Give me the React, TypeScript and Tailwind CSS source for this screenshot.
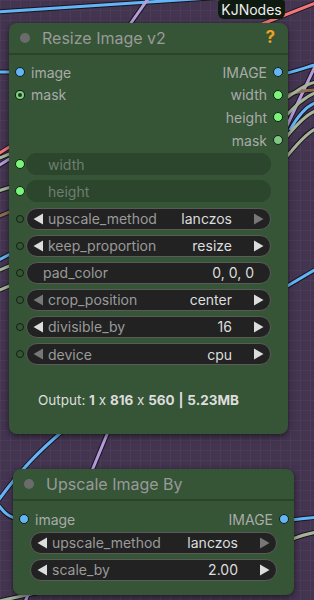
import React from "react";

type Arrow = "on" | "off" | null;

function Tri({ dir, state }: { dir: "l" | "r"; state: Arrow }) {
  if (!state) return null;
  const fill = state === "on" ? "#dddddd" : "#777777";
  return (
    <svg width="11" height="12" viewBox="0 0 11 12" className="shrink-0">
      {dir === "l" ? (
        <polygon points="10,0.5 10,11.5 0.5,6" fill={fill} />
      ) : (
        <polygon points="1,0.5 1,11.5 10.5,6" fill={fill} />
      )}
    </svg>
  );
}

function Dot({ kind }: { kind: "blue" | "green" | "dimgreen" | "hollow" | "ring" }) {
  if (kind === "hollow")
    return <div className="w-[8px] h-[8px] rounded-full border border-[#141f14] shrink-0" />;
  if (kind === "ring")
    return (
      <div className="w-[10px] h-[10px] rounded-full bg-[#141f14] flex items-center justify-center shrink-0">
        <div className="w-[8px] h-[8px] rounded-full bg-[#7fd07f] flex items-center justify-center">
          <div className="w-[4px] h-[4px] rounded-full bg-[#1f3320]" />
        </div>
      </div>
    );
  const bg =
    kind === "blue" ? "bg-[#64b5f6]" : kind === "dimgreen" ? "bg-[#81c784]" : "bg-[#7af57a]";
  return <div className={`w-[10px] h-[10px] rounded-full border border-[#141f14] shrink-0 ${bg}`} />;
}

function Widget({
  label,
  value,
  left = "on",
  right = "on",
  disabled = false,
}: {
  label: string;
  value?: string;
  left?: Arrow;
  right?: Arrow;
  disabled?: boolean;
}) {
  if (disabled) {
    return (
      <div className="flex-1 h-[22px] rounded-full bg-[#2c452d] flex items-center pl-[22px] text-[14px] text-[#6e7f6e]">
        {label}
      </div>
    );
  }
  const plain = !left && !right;
  return (
    <div
      className={`flex-1 h-[22px] rounded-full bg-[#222222] border border-[#5a5a5a] flex items-center text-[14px] ${
        plain ? "px-[16px]" : "pl-[6px] pr-[6px]"
      }`}
    >
      <Tri dir="l" state={left} />
      <span className={`text-[#9a9a9a] ${plain ? "" : "ml-[4px]"}`}>{label}</span>
      <span className="ml-auto text-[#dddddd]">{value}</span>
      {!plain && (
        <span className="ml-[21px] flex">
          <Tri dir="r" state={right} />
        </span>
      )}
    </div>
  );
}

function WidgetRow({ dot, children }: { dot: "hollow" | "green"; children: React.ReactNode }) {
  return (
    <div className="flex items-center pl-[7px] pr-[17px] gap-[2px]">
      <div className="w-[8px] flex justify-center">
        <Dot kind={dot} />
      </div>
      {children}
    </div>
  );
}

function Wires() {
  const wires: { d: string; c: string }[] = [
    { d: "M-5 12 C 80 6, 160 2, 240 -4", c: "#64b5f6" },
    { d: "M150 -4 L 126 30", c: "#b39ddb" },
    { d: "M262 24 L 318 2", c: "#f07878" },
    { d: "M-5 72 L 15 72", c: "#64b5f6" },
    { d: "M318 60 L 284 132", c: "#b39ddb" },
    { d: "M284 74 C 300 70, 310 66, 318 64", c: "#64b5f6" },
    { d: "M284 96 C 296 92, 306 90, 318 90", c: "#8d6e53" },
    { d: "M284 100 C 300 88, 310 82, 318 82", c: "#a6b59a" },
    { d: "M284 118 C 300 100, 310 94, 318 92", c: "#a6b59a" },
    { d: "M290 130 C 300 112, 310 104, 318 102", c: "#64b5f6" },
    { d: "M284 140 C 300 120, 310 112, 318 110", c: "#a6b59a" },
    { d: "M284 160 C 300 140, 310 130, 318 128", c: "#a6b59a" },
    { d: "M284 288 L 318 268", c: "#64b5f6" },
    { d: "M-5 156 L 14 144", c: "#f07878" },
    { d: "M-5 168 L 14 156", c: "#b39ddb" },
    { d: "M-5 160 L 14 152", c: "#a6b59a" },
    { d: "M-5 192 L 14 186", c: "#a6b59a" },
    { d: "M-5 218 L 14 210", c: "#8d6e53" },
    { d: "M-5 262 L 14 252", c: "#64b5f6" },
    { d: "M-5 272 L 14 264", c: "#a6b59a" },
    { d: "M-5 292 L 14 284", c: "#a6b59a" },
    { d: "M-5 505 C 20 470, 40 450, 64 430", c: "#64b5f6" },
    { d: "M-5 500 C 4 514, 10 518, 20 519", c: "#64b5f6" },
    { d: "M108 432 L 84 490", c: "#b39ddb" },
    { d: "M290 520 C 300 519, 310 518, 318 517", c: "#64b5f6" },
    { d: "M290 540 C 300 536, 310 533, 318 532", c: "#a6b59a" },
    { d: "M-5 602 L 40 592", c: "#a6b59a" },
    { d: "M24 604 L 32 586", c: "#b39ddb" },
  ];
  return (
    <svg className="absolute inset-0" width="314" height="600" viewBox="0 0 314 600">
      {wires.map((w, i) => (
        <path key={"o" + i} d={w.d} stroke="#1a1420" strokeWidth="5" fill="none" />
      ))}
      {wires.map((w, i) => (
        <path key={"c" + i} d={w.d} stroke={w.c} strokeWidth="3" fill="none" />
      ))}
    </svg>
  );
}

function TitleBar({ title, help }: { title: string; help?: boolean }) {
  return (
    <div className="h-[32px] border-b-2 border-[#2a432b] flex items-center pl-[11px] pr-[13px]">
      <div className="w-[10px] h-[10px] rounded-full bg-[#6b6b6b]" />
      <span className="ml-[12px] text-[16px] text-[#9a9a9a]">{title}</span>
      {help && <span className="ml-auto text-[17px] font-bold text-[#f0a020]">?</span>}
    </div>
  );
}

function IORow({
  inLabel,
  inDot,
  outLabel,
  outDot,
}: {
  inLabel?: string;
  inDot?: "blue" | "ring";
  outLabel: string;
  outDot: "blue" | "green" | "dimgreen";
}) {
  return (
    <div className="h-[22.6px] flex items-center pl-[6px] pr-[5px] text-[14px] text-[#aaaaaa]">
      {inLabel && inDot && (
        <>
          <div className="w-[10px] flex justify-center">
            <Dot kind={inDot} />
          </div>
          <span className="ml-[6px]">{inLabel}</span>
        </>
      )}
      <span className="ml-auto mr-[6px]">{outLabel}</span>
      <div className="w-[10px] flex justify-center">
        <Dot kind={outDot} />
      </div>
    </div>
  );
}

export default function App() {
  return (
    <div
      className="relative w-[314px] h-[600px] overflow-hidden bg-[#433450] bg-[linear-gradient(#4b3b58_1px,transparent_1px),linear-gradient(90deg,#4b3b58_1px,transparent_1px)] bg-[size:10px_10px]"
      style={{ fontFamily: "Inter, 'Noto Sans', sans-serif" }}
    >
      <Wires />

      {/* KJNodes badge */}
      <div className="absolute left-[218px] top-0 w-[67px] h-[19px] rounded-b-[6px] rounded-t-[3px] bg-[#0e1a0f] flex items-center justify-center text-[14px] leading-none text-[#eeeeee]">
        KJNodes
      </div>

      {/* Resize Image v2 */}
      <div className="absolute left-[9px] top-[23px] w-[279px] h-[411px] rounded-[8px] bg-[#355536] shadow-[0_2px_6px_rgba(0,0,0,0.55)]">
        <TitleBar title="Resize Image v2" help />
        <div className="pt-[6px]">
          <IORow inLabel="image" inDot="blue" outLabel="IMAGE" outDot="blue" />
          <IORow inLabel="mask" inDot="ring" outLabel="width" outDot="green" />
          <IORow outLabel="height" outDot="green" />
          <IORow outLabel="mask" outDot="dimgreen" />
        </div>
        <div className="mt-[2px] flex flex-col gap-[5.1px]">
          <WidgetRow dot="green">
            <Widget label="width" disabled />
          </WidgetRow>
          <WidgetRow dot="green">
            <Widget label="height" disabled />
          </WidgetRow>
          <WidgetRow dot="hollow">
            <Widget label="upscale_method" value="lanczos" right="off" />
          </WidgetRow>
          <WidgetRow dot="hollow">
            <Widget label="keep_proportion" value="resize" />
          </WidgetRow>
          <WidgetRow dot="hollow">
            <Widget label="pad_color" value="0, 0, 0" left={null} right={null} />
          </WidgetRow>
          <WidgetRow dot="hollow">
            <Widget label="crop_position" value="center" left="off" />
          </WidgetRow>
          <WidgetRow dot="hollow">
            <Widget label="divisible_by" value="16" />
          </WidgetRow>
          <WidgetRow dot="hollow">
            <Widget label="device" value="cpu" left="off" />
          </WidgetRow>
        </div>
        <div className="mt-[25px] pl-[29px] h-[20px] flex items-center text-[13.5px] text-[#dddddd]">
          Output:&nbsp;<b>1</b>&nbsp;x&nbsp;<b>816</b>&nbsp;x&nbsp;<b>560</b>&nbsp;<b>|</b>&nbsp;<b>5.23MB</b>
        </div>
      </div>

      {/* Upscale Image By */}
      <div className="absolute left-[13px] top-[469px] w-[281px] h-[126px] rounded-[8px] bg-[#355536] shadow-[0_2px_6px_rgba(0,0,0,0.55)]">
        <TitleBar title="Upscale Image By" />
        <div className="pt-[7px]">
          <IORow inLabel="image" inDot="blue" outLabel="IMAGE" outDot="blue" />
        </div>
        <div className="mt-[1px] px-[17px] flex flex-col gap-[5px]">
          <div className="flex">
            <Widget label="upscale_method" value="lanczos" right="off" />
          </div>
          <div className="flex">
            <Widget label="scale_by" value="2.00" />
          </div>
        </div>
      </div>
    </div>
  );
}
